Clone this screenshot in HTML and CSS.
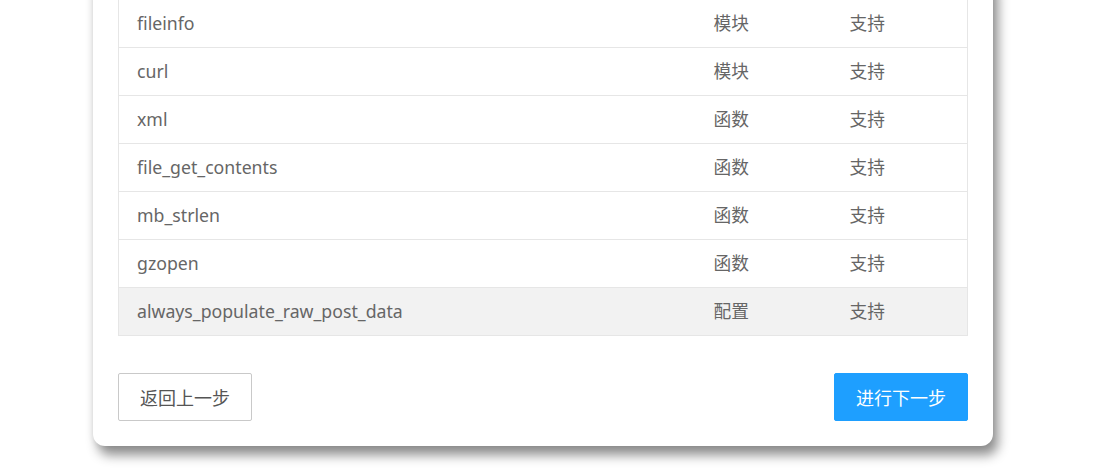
FILE: index.html
```html
<!DOCTYPE html>
<html lang="zh-CN">
<head>
  <meta charset="UTF-8">
  <meta name="viewport" content="width=device-width, initial-scale=1.0">
  <title>安装环境检测</title>
  <link rel="stylesheet" href="styles.css">
</head>
<body>
  <div class="page">
    <div class="card">
      <table class="env-table">
        <colgroup>
          <col class="col-name">
          <col class="col-type">
          <col class="col-state">
        </colgroup>
        <tbody>
          <tr><td>fileinfo</td><td>模块</td><td>支持</td></tr>
          <tr><td>curl</td><td>模块</td><td>支持</td></tr>
          <tr><td>xml</td><td>函数</td><td>支持</td></tr>
          <tr><td>file_get_contents</td><td>函数</td><td>支持</td></tr>
          <tr><td>mb_strlen</td><td>函数</td><td>支持</td></tr>
          <tr><td>gzopen</td><td>函数</td><td>支持</td></tr>
          <tr class="hover"><td>always_populate_raw_post_data</td><td>配置</td><td>支持</td></tr>
        </tbody>
      </table>
      <div class="actions">
        <button type="button" class="btn btn-default">返回上一步</button>
        <button type="button" class="btn btn-primary">进行下一步</button>
      </div>
    </div>
  </div>
</body>
</html>
```

FILE: styles.css
```css
body {
  margin: 0;
  background-color: #fff;
  font-family: "Noto Sans", "Noto Sans CJK SC", sans-serif;
  color: #666;
}

.page {
  padding: 0 0 28px 93px;
}

.card {
  width: 900px;
  box-sizing: border-box;
  margin-top: -26px;
  padding: 25px;
  background: #fff;
  border-radius: 12px;
  box-shadow: 5px 9px 12px rgba(0, 0, 0, 0.45), -1px 0 6px rgba(0, 0, 0, 0.06);
}

.env-table {
  width: 850px;
  border-collapse: collapse;
  border: 1px solid #e6e6e6;
  table-layout: fixed;
}

.col-name {
  width: 577px;
}

.col-type,
.col-state {
  width: 136px;
}

.env-table td {
  height: 48px;
  padding: 0 18px;
  box-sizing: border-box;
  border-bottom: 1px solid #e6e6e6;
  font-size: 17.7px;
  line-height: 27px;
  color: #666;
}

.env-table tr.hover td {
  background-color: #f2f2f2;
}

.actions {
  display: flex;
  justify-content: space-between;
  margin-top: 37px;
  width: 850px;
}

.btn {
  height: 48px;
  padding: 0 21px;
  border-radius: 2px;
  font-size: 18px;
  font-family: "Noto Sans CJK SC", sans-serif;
  cursor: pointer;
  box-sizing: border-box;
}

.btn-default {
  background-color: #fff;
  border: 1px solid #c9c9c9;
  color: #555;
}

.btn-primary {
  background-color: #1e9fff;
  border: 1px solid #1e9fff;
  color: #fff;
}
```
